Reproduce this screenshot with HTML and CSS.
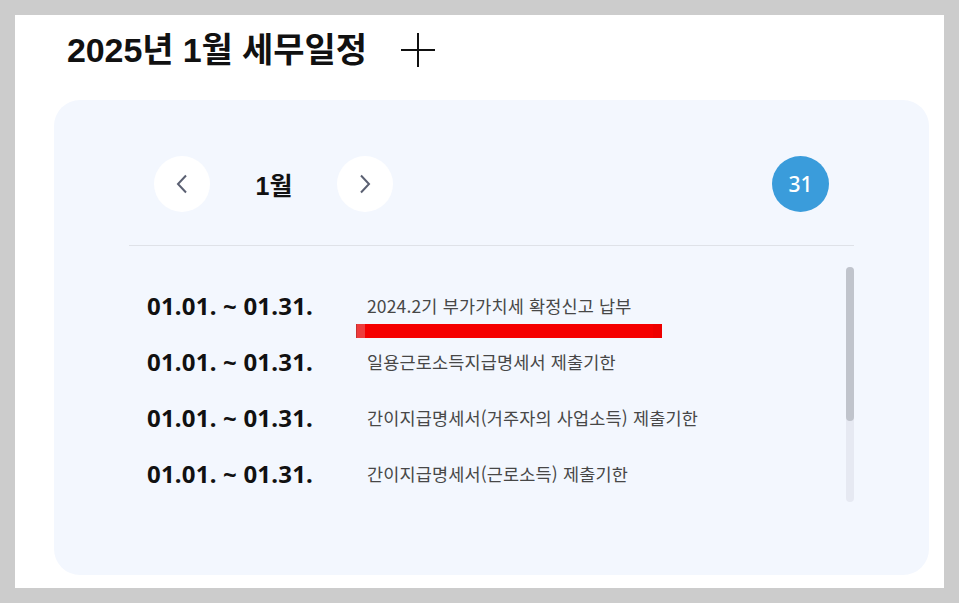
FILE: index.html
```html
<!DOCTYPE html>
<html lang="ko">
<head>
<meta charset="utf-8">
<title>2025년 1월 세무일정</title>
<link rel="stylesheet" href="styles.css">
</head>
<body>
<div class="panel">
  <header class="head">
    <h1 class="title">2025년 1월 세무일정</h1>
    <button class="plus" aria-label="더보기">
      <svg width="34" height="34" viewBox="0 0 34 34"><path d="M17 0V34M0 17H34" stroke="#111" stroke-width="2" fill="none"/></svg>
    </button>
  </header>
  <section class="card">
    <div class="nav">
      <button class="circle" aria-label="이전 달">
        <svg width="12" height="20" viewBox="0 0 12 20"><path d="M10 1.5L2 10L10 18.5" stroke="#5b6072" stroke-width="2" fill="none"/></svg>
      </button>
      <div class="month">1월</div>
      <button class="circle" aria-label="다음 달">
        <svg width="12" height="20" viewBox="0 0 12 20"><path d="M2 1.5L10 10L2 18.5" stroke="#5b6072" stroke-width="2" fill="none"/></svg>
      </button>
      <div class="spacer"></div>
      <div class="badge">31</div>
    </div>
    <div class="divider"></div>
    <div class="listwrap">
      <ul class="list">
        <li class="row"><span class="date">01.01. ~ 01.31.</span><span class="desc">2024.2기 부가가치세 확정신고 납부</span></li>
        <li class="row"><span class="date">01.01. ~ 01.31.</span><span class="desc">일용근로소득지급명세서 제출기한</span></li>
        <li class="row"><span class="date">01.01. ~ 01.31.</span><span class="desc">간이지급명세서(거주자의 사업소득) 제출기한</span></li>
        <li class="row"><span class="date">01.01. ~ 01.31.</span><span class="desc">간이지급명세서(근로소득) 제출기한</span></li>
      </ul>
      <div class="scrollbar"><div class="thumb"></div></div>
    </div>
    <div class="mark"></div>
  </section>
</div>
</body>
</html>
```

FILE: styles.css
```css
* { box-sizing: border-box; }
html, body { margin: 0; padding: 0; }
body {
  background: #cccccc;
  padding: 15px;
  width: 959px;
  height: 603px;
  overflow: hidden;
  font-family: "Noto Sans CJK KR", "Noto Sans", sans-serif;
}
.panel {
  background: #ffffff;
  width: 929px;
  height: 573px;
  padding: 0 15px 13px 39px;
  display: flex;
  flex-direction: column;
}
.head {
  height: 85px;
  display: flex;
  align-items: flex-start;
  padding-left: 13px;
  padding-top: 17px;
}
.title {
  margin: 0;
  font-family: "Liberation Sans", "Noto Sans CJK KR", sans-serif;
  font-weight: 700;
  font-size: 34px;
  line-height: 36px;
  color: #111111;
  letter-spacing: -0.1px;
}
.plus {
  margin-left: 34px;
  margin-top: 1px;
  border: 0;
  padding: 0;
  background: none;
  width: 34px;
  height: 34px;
  display: block;
}
.plus svg { display: block; }
.card {
  position: relative;
  flex: 1;
  background: #f3f7fe;
  border-radius: 26px;
  padding: 56px 75px 0 75px;
}
.nav {
  display: flex;
  align-items: center;
  height: 56px;
  padding: 0 25px;
}
.circle {
  width: 56px;
  height: 56px;
  border-radius: 50%;
  background: #ffffff;
  border: 0;
  padding: 0;
  display: flex;
  align-items: center;
  justify-content: center;
}
.circle svg { display: block; }
.month {
  width: 127px;
  text-align: center;
  font-family: "Liberation Sans", "Noto Sans CJK KR", sans-serif;
  font-weight: 700;
  font-size: 25px;
  color: #111111;
  padding-left: 1px;
}
.spacer { flex: 1; }
.badge {
  width: 57px;
  height: 56px;
  border-radius: 50%;
  background: #3a9cdb;
  color: #ffffff;
  font-family: "Noto Sans", sans-serif;
  font-size: 21px;
  font-weight: 500;
  display: flex;
  align-items: center;
  justify-content: center;
}
.divider {
  height: 1px;
  background: #dfe2e8;
  margin-top: 33px;
}
.listwrap {
  display: flex;
  margin-top: 21px;
  height: 235px;
}
.list {
  flex: 1;
  list-style: none;
  margin: 0;
  padding: 10px 0 0 18px;
}
.scrollbar {
  width: 8px;
  height: 235px;
  background: #e6e9f2;
  border-radius: 4px;
}
.thumb {
  height: 154px;
  background: #c0c4cc;
  border-radius: 4px;
}
.row {
  height: 56px;
  display: flex;
  align-items: center;
}
.date {
  width: 220px;
  font-family: "Noto Sans", sans-serif;
  font-weight: 700;
  font-size: 24px;
  color: #111111;
  letter-spacing: 0.2px;
}
.desc {
  font-size: 17.5px;
  color: #474747;
  letter-spacing: 0.15px;
}
.mark {
  position: absolute;
  left: 302px;
  top: 224px;
  width: 306px;
  height: 14px;
  background: linear-gradient(to right, #ee3b3b 0, #ee3b3b 8px, #f50000 8px, #f50000 296px, #ee0000 296px);
  border-left: 1px solid #c83030;
}
```
